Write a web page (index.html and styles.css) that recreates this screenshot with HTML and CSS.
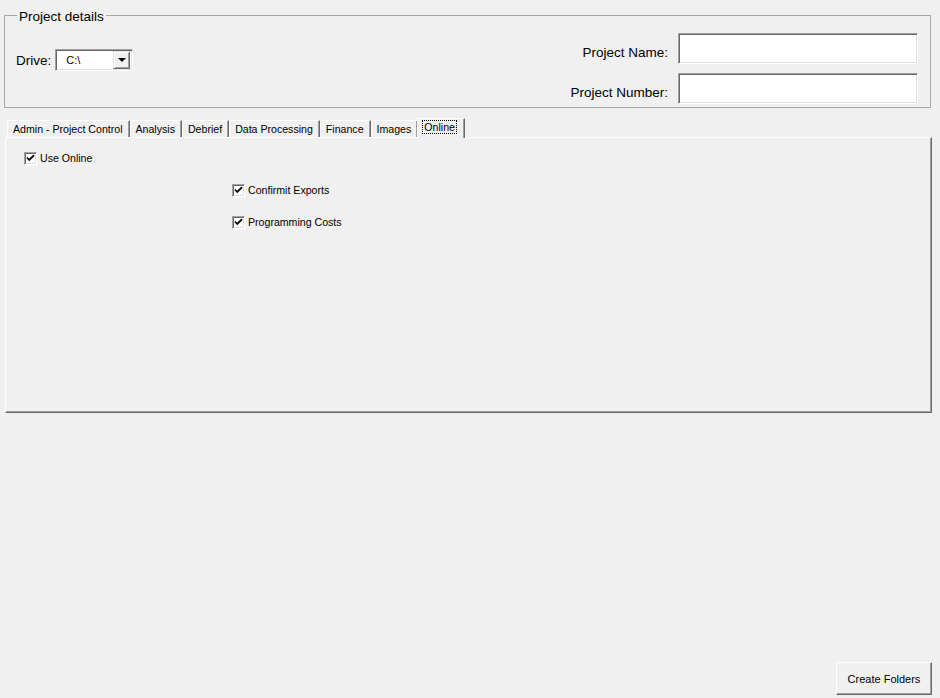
FILE: index.html
```html
<!DOCTYPE html>
<html lang="en">
<head>
  <meta charset="UTF-8">
  <title>Project Folders</title>
  <link rel="stylesheet" href="styles.css">
</head>
<body>

<fieldset class="details">
  <legend>Project details</legend>
  <div class="drive">
    <label>Drive:</label>
    <div class="combo">
      <span class="combo-text">C:\</span>
      <span class="combo-btn"><span class="arrow"></span></span>
    </div>
  </div>
  <div class="fields">
    <label>Project Name:</label>
    <div class="textbox"></div>
    <label>Project Number:</label>
    <div class="textbox"></div>
  </div>
</fieldset>

<div class="tabs">
  <div class="tab-strip">
    <div class="tab">Admin - Project Control</div>
    <div class="tab">Analysis</div>
    <div class="tab">Debrief</div>
    <div class="tab">Data Processing</div>
    <div class="tab">Finance</div>
    <div class="tab">Images</div>
    <div class="tab selected"><span class="focus">Online</span></div>
  </div>
  <div class="tab-panel">
    <div class="check">
      <span class="box"><svg width="9" height="9" viewBox="0 0 9 9"><path d="M1 3.5 L3.3 6 L8 1.2" fill="none" stroke="#000" stroke-width="1.8"/></svg></span>
      Use Online
    </div>
    <div class="sub-checks">
      <div class="check">
        <span class="box"><svg width="9" height="9" viewBox="0 0 9 9"><path d="M1 3.5 L3.3 6 L8 1.2" fill="none" stroke="#000" stroke-width="1.8"/></svg></span>
        Confirmit Exports
      </div>
      <div class="check">
        <span class="box"><svg width="9" height="9" viewBox="0 0 9 9"><path d="M1 3.5 L3.3 6 L8 1.2" fill="none" stroke="#000" stroke-width="1.8"/></svg></span>
        Programming Costs
      </div>
    </div>
  </div>
</div>

<div class="footer">
  <button class="btn">Create Folders</button>
</div>

</body>
</html>
```

FILE: styles.css
```css
html, body {
  margin: 0;
}
body {
  background: #f0f0f0;
  color: #000;
  font-family: "Liberation Sans", Arial, sans-serif;
  font-size: 11px;
  height: 698px;
  box-sizing: border-box;
  padding: 5px 8px 3px 4px;
  display: flex;
  flex-direction: column;
}

/* group box */
.details {
  margin: 0 1px 0 0;
  border: 1px solid #a8a8a8;
  padding: 8px 12px 3px 11px;
  display: flex;
  justify-content: space-between;
  align-items: flex-start;
}
.details legend {
  font-size: 13.5px;
  line-height: 16px;
  padding: 4px 2px 0;
  margin-left: 1px;
}
.drive {
  display: flex;
  align-items: center;
  gap: 4px;
  margin-top: 16px;
  font-size: 13.5px;
}
.combo {
  width: 78px;
  height: 22px;
  box-sizing: border-box;
  background: #fff;
  border-top: 1px solid #a0a0a0;
  border-left: 1px solid #a0a0a0;
  border-right: 1px solid #fff;
  border-bottom: 1px solid #fff;
  box-shadow: inset 1px 1px #696969, inset -1px -1px #e3e3e3;
  display: flex;
  align-items: center;
  justify-content: space-between;
  padding: 2px;
}
.combo-text {
  font-size: 11px;
  padding-left: 8px;
}
.combo-btn {
  width: 17px;
  height: 18px;
  box-sizing: border-box;
  background: #f0f0f0;
  border-top: 1px solid #e3e3e3;
  border-left: 1px solid #e3e3e3;
  border-right: 1px solid #696969;
  border-bottom: 1px solid #696969;
  box-shadow: inset 1px 1px #fff, inset -1px -1px #a0a0a0;
  display: flex;
  align-items: center;
  justify-content: center;
}
.arrow {
  width: 0;
  height: 0;
  border-left: 4px solid transparent;
  border-right: 4px solid transparent;
  border-top: 4px solid #000;
}
.fields {
  display: grid;
  grid-template-columns: auto 240px;
  column-gap: 10px;
  row-gap: 9px;
  align-items: center;
  font-size: 13.5px;
}
.fields label {
  text-align: right;
  padding-top: 7px;
}
.textbox {
  height: 31px;
  box-sizing: border-box;
  background: #fff;
  border-top: 1px solid #a0a0a0;
  border-left: 1px solid #a0a0a0;
  border-right: 1px solid #fff;
  border-bottom: 1px solid #fff;
  box-shadow: inset 1px 1px #696969, inset -1px -1px #e3e3e3;
}

/* tabs */
.tabs {
  margin: 10px 0 0 1px;
}
.tab-strip {
  display: flex;
  align-items: flex-end;
  padding-left: 2px;
  height: 19px;
  position: relative;
  z-index: 1;
  font-size: 10.6px;
}
.tab {
  height: 17px;
  box-sizing: border-box;
  line-height: 13px;
  padding: 2px 6px 2px 5px;
  border-top: 1px solid #fff;
  border-left: 1px solid #fff;
  border-right: 1px solid #696969;
  box-shadow: inset -1px 0 #a0a0a0;
  white-space: nowrap;
}
.tab.selected {
  height: 20px;
  margin: 0 0 -1px -1px;
  padding: 1px 7px 4px 4px;
  background: #f0f0f0;
}
.focus {
  display: inline-block;
  border: 1px dotted #000;
  padding: 0 1px;
  line-height: 12px;
}
.tab-panel {
  height: 276px;
  box-sizing: border-box;
  border-top: 1px solid #fff;
  border-left: 1px solid #fff;
  border-right: 1px solid #696969;
  border-bottom: 1px solid #696969;
  box-shadow: inset -1px -1px #a0a0a0;
  padding: 14px 0 0 18px;
}
.check {
  display: flex;
  align-items: center;
  gap: 3px;
  height: 13px;
  line-height: 13px;
  font-size: 10.6px;
}
.box {
  width: 13px;
  height: 13px;
  box-sizing: border-box;
  background: #fff;
  border-top: 1px solid #a0a0a0;
  border-left: 1px solid #a0a0a0;
  border-right: 1px solid #fff;
  border-bottom: 1px solid #fff;
  box-shadow: inset 1px 1px #696969, inset -1px -1px #e3e3e3;
  display: flex;
  align-items: center;
  justify-content: center;
}
.box svg {
  display: block;
}
.sub-checks {
  margin: 19px 0 0 208px;
  display: flex;
  flex-direction: column;
  gap: 19px;
}

/* bottom button */
.footer {
  margin-top: auto;
  display: flex;
  justify-content: flex-end;
}
.btn {
  width: 96px;
  height: 33px;
  font-family: "Liberation Sans", Arial, sans-serif;
  font-size: 11px;
  color: #000;
  background: #f0f0f0;
  border-top: 1px solid #fff;
  border-left: 1px solid #fff;
  border-right: 1px solid #696969;
  border-bottom: 1px solid #696969;
  box-shadow: inset -1px -1px #a0a0a0;
  padding: 0;
}
```
